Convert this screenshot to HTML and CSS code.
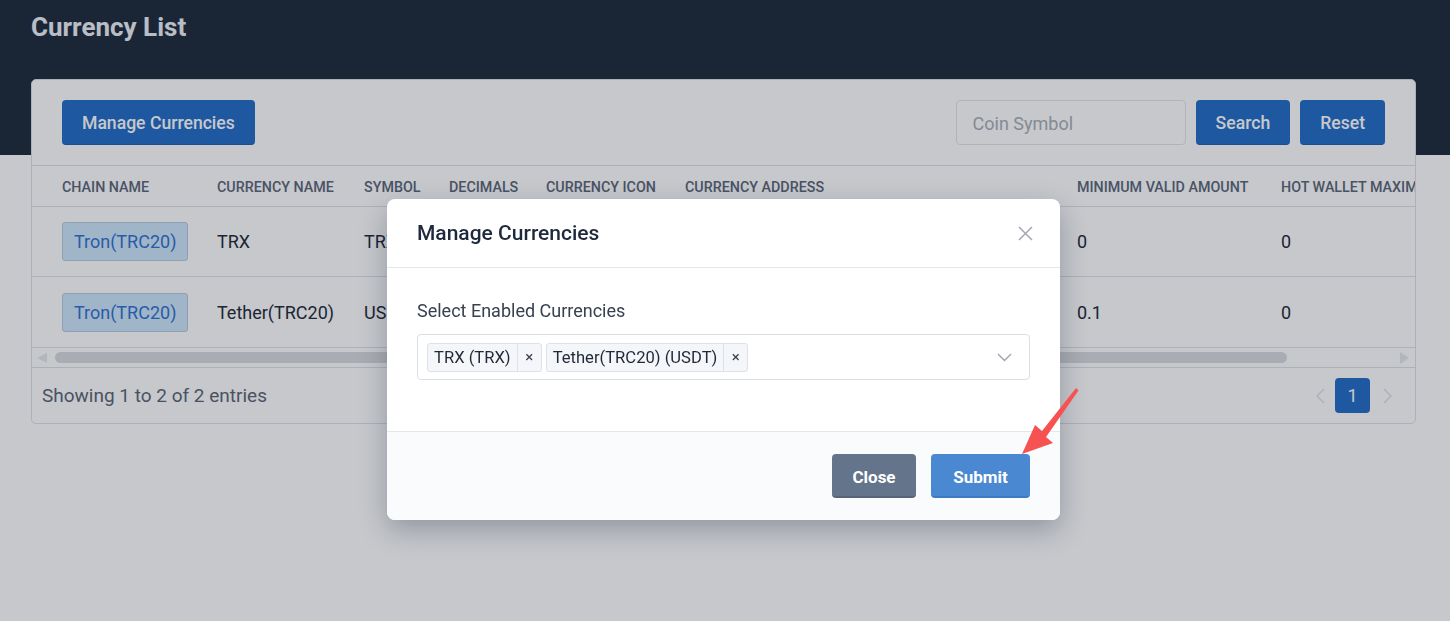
FILE: index.html
```html
<!DOCTYPE html>
<html lang="en">
<head>
<meta charset="utf-8">
<title>Currency List</title>
<link rel="stylesheet" href="styles.css">
</head>
<body>
<div class="page">
  <h1 class="page-title">Currency List</h1>
  <section class="card">
    <div class="toolbar">
      <button class="btn btn-primary">Manage Currencies</button>
      <div class="search">
        <input class="input" type="text" placeholder="Coin Symbol">
        <button class="btn btn-primary">Search</button>
        <button class="btn btn-primary">Reset</button>
      </div>
    </div>
    <div class="table-wrap">
      <table class="table">
        <colgroup>
          <col class="c1"><col class="c2"><col class="c3"><col class="c4"><col class="c5"><col class="c6"><col class="c7"><col class="c8">
        </colgroup>
        <thead>
          <tr>
            <th>CHAIN NAME</th>
            <th>CURRENCY NAME</th>
            <th>SYMBOL</th>
            <th>DECIMALS</th>
            <th>CURRENCY ICON</th>
            <th>CURRENCY ADDRESS</th>
            <th>MINIMUM VALID AMOUNT</th>
            <th>HOT WALLET MAXIMUM AMOUNT</th>
          </tr>
        </thead>
        <tbody>
          <tr>
            <td><span class="tag">Tron(TRC20)</span></td>
            <td>TRX</td>
            <td>TRX</td>
            <td>6</td>
            <td><span class="coin coin-trx"></span></td>
            <td>-</td>
            <td>0</td>
            <td>0</td>
          </tr>
          <tr>
            <td><span class="tag">Tron(TRC20)</span></td>
            <td>Tether(TRC20)</td>
            <td>USDT</td>
            <td>6</td>
            <td><span class="coin coin-usdt"></span></td>
            <td>TR7NHqjeKQxGTCi8q8ZY4pL8otSzgjLj6t</td>
            <td>0.1</td>
            <td>0</td>
          </tr>
        </tbody>
      </table>
    </div>
    <div class="hscroll">
      <span class="hs-left"></span>
      <span class="hs-thumb"></span>
      <span class="hs-right"></span>
    </div>
    <div class="card-footer">
      <span class="info">Showing 1 to 2 of 2 entries</span>
      <div class="pager">
        <svg class="pg-arrow" width="9" height="16" viewBox="0 0 9 16"><polyline points="8,1 1,8 8,15" fill="none" stroke="#dde1e6" stroke-width="1.5"/></svg>
        <span class="pg-num">1</span>
        <svg class="pg-arrow" width="9" height="16" viewBox="0 0 9 16"><polyline points="1,1 8,8 1,15" fill="none" stroke="#dde1e6" stroke-width="1.5"/></svg>
      </div>
    </div>
  </section>
</div>

<div class="backdrop">
  <div class="modal">
    <div class="modal-header">
      <h2 class="modal-title">Manage Currencies</h2>
      <svg class="modal-close" width="15" height="15" viewBox="0 0 15 15"><path d="M1 1 L14 14 M14 1 L1 14" stroke="#a3a8b0" stroke-width="1.5" fill="none"/></svg>
    </div>
    <div class="modal-body">
      <div class="field-label">Select Enabled Currencies</div>
      <div class="select">
        <span class="chip"><span class="chip-text">TRX (TRX)</span><span class="chip-x">×</span></span>
        <span class="chip"><span class="chip-text">Tether(TRC20) (USDT)</span><span class="chip-x">×</span></span>
        <svg class="chevron" width="15" height="9" viewBox="0 0 15 9"><polyline points="1,1 7.5,7.5 14,1" fill="none" stroke="#9ca3af" stroke-width="1.4"/></svg>
      </div>
    </div>
    <div class="modal-footer">
      <button class="btn btn-close">Close</button>
      <button class="btn btn-submit">Submit</button>
    </div>
  </div>
</div>

<svg class="annotation" width="80" height="85" viewBox="0 0 80 85">
  <polygon points="12,74 25,45 32,51 66,8 68.5,10.5 36,57 43,63" fill="#f65252"/>
</svg>
</body>
</html>
```

FILE: styles.css
```css
* { box-sizing: border-box; }

html, body {
  margin: 0;
  padding: 0;
}

body {
  font-family: Roboto, "Noto Sans", sans-serif;
  color: #1f2937;
  background: #ffffff;
}

.page {
  min-height: 621px;
  padding: 10px 34px 0 31px;
  background: linear-gradient(#1e293b 0, #1e293b 155px, #ffffff 155px);
}

.page-title {
  margin: 0 0 35px;
  font-size: 26px;
  line-height: 34px;
  font-weight: 700;
  color: #eef2f7;
}

.card {
  background: #ffffff;
  border: 1px solid #dde1e6;
  border-radius: 5px;
  overflow: hidden;
}

.toolbar {
  display: flex;
  justify-content: space-between;
  align-items: center;
  padding: 20px 30px;
}

.btn {
  height: 45px;
  padding: 2px 20px 0;
  border: 0;
  border-radius: 4px;
  font-family: Roboto, sans-serif;
  font-size: 17.6px;
  font-weight: 500;
  color: #ffffff;
  cursor: pointer;
}

.btn-primary {
  background: #236cc5;
  border-bottom: 1px solid #1d5fae;
}

.search {
  display: flex;
  gap: 10px;
}

.input {
  width: 230px;
  height: 45px;
  border: 1px solid #e1e4e8;
  border-radius: 4px;
  padding: 1px 16px 0;
  font-family: Roboto, sans-serif;
  font-size: 18px;
  color: #1f2937;
  background: #ffffff;
}

.input::placeholder { color: #a9aeb5; }

.table-wrap {
  overflow: hidden;
}

.table {
  width: 1499px;
  table-layout: fixed;
  border-collapse: separate;
  border-spacing: 0;
}

.c1 { width: 185px; }
.c2 { width: 147px; }
.c3 { width: 85px; }
.c4 { width: 97px; }
.c5 { width: 139px; }
.c6 { width: 392px; }
.c7 { width: 204px; }
.c8 { width: 250px; }

.table th {
  height: 42px;
  padding: 1px 0 0;
  border-top: 1px solid #dde1e6;
  border-bottom: 1px solid #dde1e6;
  text-align: left;
  white-space: nowrap;
  font-size: 14.3px;
  font-weight: 500;
  color: #5b6677;
  background: #ffffff;
}

.table td {
  height: 70px;
  padding: 0;
  border-bottom: 1px solid #dde1e6;
  white-space: nowrap;
  overflow: hidden;
  font-size: 18px;
  color: #1f2937;
}

.table tbody tr:last-child td { height: 71px; }

.table th:first-child,
.table td:first-child {
  padding-left: 30px;
}

.tag {
  display: inline-block;
  height: 39px;
  line-height: 37px;
  padding: 0 11px;
  border: 1px solid #b4cbe0;
  border-radius: 3px;
  background: #cee6fa;
  color: #2f72d2;
  font-size: 18px;
}

.coin {
  display: inline-block;
  width: 28px;
  height: 28px;
  border-radius: 50%;
  vertical-align: middle;
}

.coin-trx { background: #e53935; }
.coin-usdt { background: #26a17b; }

.hscroll {
  height: 20px;
  border-bottom: 1px solid #dde1e6;
  display: flex;
  align-items: center;
  padding: 0 6px 0 5px;
}

.hs-left {
  width: 0;
  height: 0;
  border-top: 5.5px solid transparent;
  border-bottom: 5.5px solid transparent;
  border-right: 10px solid #e6e8eb;
}

.hs-thumb {
  width: 1232px;
  height: 11px;
  margin-left: 8px;
  border-radius: 6px;
  background: #d9dbdd;
}

.hs-right {
  margin-left: auto;
  width: 0;
  height: 0;
  border-top: 6px solid transparent;
  border-bottom: 6px solid transparent;
  border-left: 9px solid #e6e8eb;
}

.card-footer {
  height: 55px;
  display: flex;
  justify-content: space-between;
  align-items: center;
  padding: 0 23px 0 10px;
}

.info {
  font-size: 19px;
  color: #5b6574;
}

.pager {
  display: flex;
  align-items: center;
}

.pg-num {
  width: 35px;
  height: 35px;
  margin: 0 13px 0 10px;
  border-radius: 4px;
  background: #236cc5;
  color: #ffffff;
  font-size: 18px;
  display: flex;
  align-items: center;
  justify-content: center;
}

.pg-arrow { display: block; }

/* modal */
.backdrop {
  position: fixed;
  inset: 0;
  background: rgba(15, 23, 42, 0.24);
  display: flex;
  justify-content: center;
  align-items: flex-start;
  padding: 199px 3px 0 0;
}

.modal {
  width: 673px;
  background: #ffffff;
  border-radius: 8px;
  overflow: hidden;
  box-shadow: 0 10px 28px rgba(15, 23, 42, 0.28);
}

.modal-header {
  height: 69px;
  border-bottom: 1px solid #e3e6ea;
  display: flex;
  align-items: center;
  justify-content: space-between;
  padding: 0 27px 0 30px;
}

.modal-title {
  margin: 0;
  font-size: 21px;
  font-weight: 500;
  color: #1e293b;
}

.modal-close { display: block; }

.modal-body {
  padding: 30px 30px 51px;
}

.field-label {
  font-size: 18px;
  line-height: 26px;
  color: #374151;
  margin-bottom: 10px;
}

.select {
  height: 46px;
  border: 1px solid #dadfe5;
  border-radius: 4px;
  display: flex;
  align-items: center;
  gap: 4px;
  padding: 0 17px 0 9px;
}

.chip {
  height: 29px;
  display: flex;
  align-items: stretch;
  border: 1px solid #dde2e8;
  border-radius: 3px;
  background: #f4f6f9;
  font-size: 16.6px;
  color: #1f2937;
}

.chip-text {
  padding: 0 6px;
  line-height: 27px;
}

.chip-x {
  width: 24px;
  border-left: 1px solid #dde2e8;
  display: flex;
  align-items: center;
  justify-content: center;
  font-size: 15px;
  color: #374151;
}

.chevron {
  margin-left: auto;
  display: block;
}

.modal-footer {
  background: #fafbfd;
  border-top: 1px solid #e3e6ea;
  display: flex;
  justify-content: flex-end;
  gap: 15px;
  padding: 22px 30px;
}

.btn-close,
.btn-submit {
  height: 44px;
  padding: 3px 0 0;
  font-size: 17px;
  font-weight: 700;
}

.btn-close {
  width: 84px;
  background: #64748b;
  border-bottom: 2px solid #56657a;
}

.btn-submit {
  width: 99px;
  background: #4a89d1;
  border-bottom: 2px solid #3f7bc0;
}

.annotation {
  position: absolute;
  left: 1010px;
  top: 380px;
}
```
